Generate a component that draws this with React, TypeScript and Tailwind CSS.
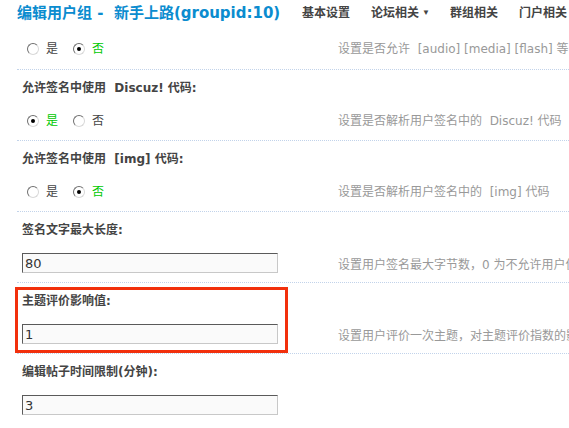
import React from "react";

const Radio = ({ checked }: { checked?: boolean }) => (
  <span className="relative inline-flex h-[12px] w-[12px] items-center justify-center rounded-full border border-t-[#6f6f6f] border-l-[#6f6f6f] border-r-[#d8d8d8] border-b-[#d8d8d8] bg-white">
    {checked && <span className="block h-[4px] w-[4px] rounded-full bg-black" />}
  </span>
);

const RadioGroup = ({ yes }: { yes: boolean }) => (
  <div className="flex h-[20px] items-center pl-[10px] text-[12px] leading-[16px]">
    <Radio checked={yes} />
    <span className={`ml-[7px] ${yes ? "text-[#00c800]" : "text-[#444]"}`}>是</span>
    <span className="ml-[15px] flex items-center">
      <Radio checked={!yes} />
    </span>
    <span className={`ml-[7px] ${!yes ? "text-[#00c800]" : "text-[#444]"}`}>否</span>
  </div>
);

const TextInput = ({ value }: { value: string }) => (
  <div className="pl-[5px]">
    <input
      readOnly
      value={value}
      className="block h-[20px] w-[256px] border border-t-[#5a5a5a] border-l-[#5a5a5a] border-r-[#c8c8c8] border-b-[#c8c8c8] bg-[#fafafa] pl-[2px] text-[13px] leading-[18px] text-[#333] outline-none font-['DejaVu_Sans','Noto_Sans_CJK_SC',sans-serif]"
    />
  </div>
);

const Desc = ({ children, offset }: { children?: React.ReactNode; offset?: boolean }) => (
  <div
    className={`text-[12px] leading-[16px] text-[#999] font-['DejaVu_Sans','Noto_Sans_CJK_SC',sans-serif] ${
      offset ? "mt-[3px]" : ""
    }`}
  >
    {children}
  </div>
);

const Section = ({
  label,
  content,
  desc,
  highlight,
  descOffset = false,
}: {
  label: React.ReactNode;
  content: React.ReactNode;
  desc?: React.ReactNode;
  highlight?: boolean;
  descOffset?: boolean;
}) => (
  <div className="relative border-t border-dotted border-[#c2d3ea] pt-[10px] pb-[9px]">
    <div className="h-[16px] pl-[5px] text-[12px] font-bold leading-[16px] text-[#444] font-['DejaVu_Sans','Noto_Sans_CJK_SC',sans-serif]">
      {label}
    </div>
    <div className="mt-[15px] flex h-[20px] items-center">
      <div className="w-[321px] shrink-0">{content}</div>
      <Desc offset={descOffset}>{desc}</Desc>
    </div>
    {highlight && (
      <div className="pointer-events-none absolute left-[-2px] top-[4px] z-10 h-[66px] w-[273px] border-[3px] border-[#f2300c]" />
    )}
  </div>
);

export default function App() {
  return (
    <div className="h-[428px] w-[569px] overflow-hidden whitespace-nowrap bg-white font-['Liberation_Sans','Noto_Sans_CJK_SC',sans-serif]">
      {/* header */}
      <div className="flex h-[25px] items-center">
        <div className="w-[285px] shrink-0 pl-[17px] text-[15px] font-bold leading-[18px] text-[#0b8ccf] font-['DejaVu_Sans','Noto_Sans_CJK_SC',sans-serif]">
          编辑用户组 -&nbsp; 新手上路(groupid:10)
        </div>
        <div className="ml-[17px] flex items-center text-[12px] font-bold leading-[16px] text-[#444]">
          <span>基本设置</span>
          <span className="ml-[21px] flex items-center">
            论坛相关<span className="ml-[3px] text-[8px] font-normal">▼</span>
          </span>
          <span className="ml-[20px]">群组相关</span>
          <span className="ml-[21px]">门户相关</span>
        </div>
      </div>

      <div className="ml-[17px]">
        {/* first, partially scrolled section */}
        <div className="pt-[14px] pb-[10px]">
          <div className="flex h-[20px] items-center">
            <div className="w-[321px] shrink-0">
              <RadioGroup yes={false} />
            </div>
            <Desc>设置是否允许&nbsp; [audio] [media] [flash] 等</Desc>
          </div>
        </div>

        <Section
          label={<>允许签名中使用&nbsp; Discuz! 代码:</>}
          content={<RadioGroup yes={true} />}
          desc={<>设置是否解析用户签名中的&nbsp; Discuz! 代码</>}
        />
        <Section
          label={<>允许签名中使用&nbsp; [img] 代码:</>}
          content={<RadioGroup yes={false} />}
          desc={<>设置是否解析用户签名中的&nbsp; [img] 代码</>}
        />
        <Section
          label="签名文字最大长度:"
          content={<TextInput value="80" />}
          desc="设置用户签名最大字节数，0 为不允许用户使用签名"
          descOffset
        />
        <Section
          label="主题评价影响值:"
          content={<TextInput value="1" />}
          desc="设置用户评价一次主题，对主题评价指数的影响"
          descOffset
          highlight
        />
        <Section label="编辑帖子时间限制(分钟):" content={<TextInput value="3" />} />
      </div>
    </div>
  );
}
